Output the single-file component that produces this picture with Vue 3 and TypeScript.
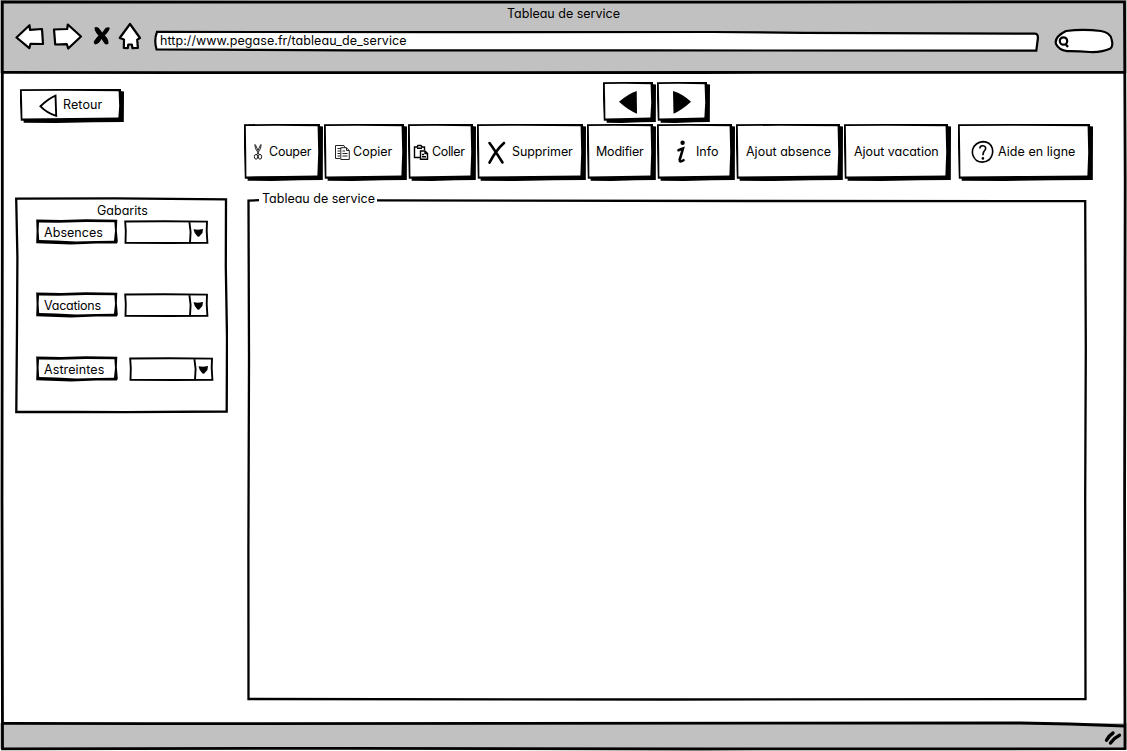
<script setup lang="ts">
type IconName = 'scissors' | 'copy' | 'paste' | 'cross' | 'info' | 'help' | ''

interface SketchButton {
  label: string
  icon: IconName
  width: number
  textX: number
  spacing: number
}

interface Template {
  label: string
  spacing: number
  wide: boolean
}

const tools: SketchButton[] = [
  { label: 'Couper', icon: 'scissors', width: 79, textX: 25, spacing: -0.25 },
  { label: 'Copier', icon: 'copy', width: 83, textX: 29, spacing: 0 },
  { label: 'Coller', icon: 'paste', width: 68, textX: 24, spacing: -0.35 },
  { label: 'Supprimer', icon: 'cross', width: 109, textX: 35, spacing: -0.1 },
  { label: 'Modifier', icon: '', width: 69, textX: 9, spacing: -0.2 },
  { label: 'Info', icon: 'info', width: 78, textX: 39, spacing: 0 },
  { label: 'Ajout absence', icon: '', width: 107, textX: 10, spacing: 0 },
  { label: 'Ajout vacation', icon: '', width: 107, textX: 10, spacing: -0.05 },
  { label: 'Aide en ligne', icon: 'help', width: 135, textX: 40, spacing: 0.05 },
]

const templates: Template[] = [
  { label: 'Absences', spacing: 0.05, wide: false },
  { label: 'Vacations', spacing: -0.25, wide: false },
  { label: 'Astreintes', spacing: 0.1, wide: true },
]

// Hand-drawn outline of a raised button: drop shadow, then edge, then face.
const shadow = (w: number, h: number) =>
  `M3.5 ${h - 5}L3.7 ${h - 0.3}L${w * 0.35} ${h}L${w * 0.7} ${h - 0.7}L${w - 0.2} ${h - 0.9}L${w} 2.4L${w - 5} 2Z`
const edge = (w: number, h: number) =>
  `M0 0.2L${w * 0.4} 0L${w - 3} 0L${w - 2.7} ${h * 0.5}L${w - 3} ${h - 3}L${w * 0.5} ${h - 3}L0.8 ${h - 2.2}L0 ${h * 0.4}Z`
const face = (w: number, h: number) =>
  `M1.8 2L${w * 0.4} 1.8L${w - 5.4} 2.2L${w - 4.8} ${h * 0.5}L${w - 5.6} ${h - 5.6}L${w * 0.5} ${h - 5}L2.4 ${h - 4.6}L2.2 ${h * 0.5}Z`
</script>

<template>
  <div class="window">
    <header class="chrome">
      <div class="title">Tableau de service</div>
      <div class="nav">
        <svg class="back" width="30" height="28" viewBox="0 0 30 28">
          <path d="M1.500 14.500L14.500 2.200L15 6.800L27 6L28 21L15.500 20.800L14.300 25.200Z" />
        </svg>
        <svg class="forward" width="31" height="30" viewBox="0 0 31 30">
          <path d="M2 7.500L15.200 7L15.800 2.500L29 14.500L16.200 26.500L14.800 22.200L3.200 22.500L2.800 17Z" />
        </svg>
        <svg class="stop" width="18" height="21" viewBox="0 0 18 21">
          <path d="M1.500 1.500Q3 .2 5.500 1.800L9.300 6.500L12.500 2Q15 .8 16.800 1.800Q16.500 5 11.800 9.500Q15.800 13 15.500 17.500Q13.500 19.500 11.500 17.500L8.500 13Q6 18 2 18.500Q.3 17 .8 15.500Q3 12 5.500 9.500Q1.500 5.500 1.500 1.500Z" />
        </svg>
        <svg class="home" width="24" height="29" viewBox="0 0 24 29">
          <path d="M12 2L22 16L19.200 17.600L19.900 26L14.500 26.200L13.800 22.500L10.300 22.500L9.800 26.200L5.800 26L6 17.500L1.700 16Z" />
        </svg>
        <div class="url">
          <svg width="888" height="22" viewBox="0 0 888 22">
            <path d="M4 1.900L300 2.200L560 2L650 2.800L882 3.700Q885.500 4 884.800 9L883.300 20.700L500 20.400L200 20.400L3.500 19.300Q.8 10 4 1.900Z" />
          </svg>
          <span>http://www.pegase.fr/tableau_de_service</span>
        </div>
        <svg class="search" width="62" height="27" viewBox="0 0 62 27">
          <path d="M13 3Q30 .8 48 3Q57 4.500 58.500 11Q60.500 18 57.500 20.500Q49 24.500 37 24Q24 23 14 23.200Q6 22 3 16Q1 9 13 3Z" />
          <g class="lens"><ellipse cx="10.500" cy="13" rx="3.700" ry="3.700" /><path d="M12.500 16L15 19" /></g>
        </svg>
      </div>
    </header>

    <main class="body">
      <aside class="side">
        <button class="raised retour">
          <svg width="104" height="34" viewBox="0 0 104 34">
            <path :d="shadow(104, 34)" /><path :d="edge(104, 34)" /><path class="face" :d="face(104, 34)" />
            <path class="line" d="M20.500 17.300Q28 10 35.500 6.700L36.200 26.800Q27 24 20.500 17.300Z" />
          </svg>
          <span class="text">Retour</span>
        </button>

        <section class="panel">
          <svg class="outline" width="213" height="217" viewBox="0 0 213 217">
            <path d="M1.200 1.700L100 1.400L211 2.300L210.800 70L212 140L211.700 214.500L110 215.200L60 215L1.300 215L2 130L2.400 60Z" />
          </svg>
          <div class="content">
            <h2>Gabarits</h2>
            <div v-for="item in templates" :key="item.label" class="row" :class="{ wide: item.wide }">
              <div class="tag">
                <svg width="82" height="26" viewBox="0 0 82 26">
                  <path fill-rule="evenodd" d="M.2 .4L25 1L50 .2L81.300 .7L80.800 11L81.800 22.500L81 24.600L60 24.500L35 25.500L.2 24.200L.6 12ZM3 3.600L2.600 12L3.200 21L20 21.500L40 22.500L60 22L78 21.700L79 12L78.400 3.300L50 2.900L22 3.700Z" />
                </svg>
                <span :style="{ letterSpacing: item.spacing + 'px' }">{{ item.label }}</span>
              </div>
              <svg class="combo" width="85" height="26" viewBox="0 0 85 26">
                <path class="line" d="M1.200 2.500L40 2.200L83 2.600L82.700 12L83.400 23.700L45 24L1.500 23.800L1.800 12ZM65.300 2.200L66.600 13L66 23.800" />
                <path class="tri" d="M69.500 10.200L74 10.800L79 10.100L78.400 13.900L75 17.800L73.500 17.600Q70 14 69.500 10.200Z" />
              </svg>
            </div>
          </div>
        </section>
      </aside>

      <section class="work">
        <div class="pager">
          <button class="raised" aria-label="Précédent">
            <svg width="53" height="41" viewBox="0 0 53 41">
              <path :d="shadow(53, 41)" /><path :d="edge(53, 41)" /><path class="face" :d="face(53, 41)" />
              <path d="M16 19.800Q25 12 33.700 9L34 31.800Q25 28 16 19.800Z" />
            </svg>
          </button>
          <button class="raised" aria-label="Suivant">
            <svg width="53" height="41" viewBox="0 0 53 41">
              <path :d="shadow(53, 41)" /><path :d="edge(53, 41)" /><path class="face" :d="face(53, 41)" />
              <path d="M16 9Q26 12 34 19.800Q25 28 16.500 31.800Z" />
            </svg>
          </button>
        </div>

        <div class="toolbar">
          <button v-for="tool in tools" :key="tool.label" class="raised" :class="tool.icon">
            <svg :width="tool.width" height="57" :viewBox="`0 0 ${tool.width} 57`">
              <path :d="shadow(tool.width, 57)" /><path :d="edge(tool.width, 57)" /><path class="face" :d="face(tool.width, 57)" />
              <g v-if="tool.icon === 'scissors'" class="thin">
                <path d="M10.800 20.500L11.500 24.500L15.500 31M17.200 20.500L16.500 24.500L12.500 31M11.300 20.500L14 26.500L16.700 20.500" />
                <ellipse cx="12" cy="32.800" rx="1.700" ry="2.400" /><ellipse cx="16" cy="32.800" rx="1.700" ry="2.400" />
              </g>
              <g v-else-if="tool.icon === 'copy'" class="thin">
                <path d="M16 34.500H11.500V21.500H20L21 24M13.500 24.500H18M13.500 27H16M13.500 29.500H16M13.500 32H16" />
                <path class="paper" d="M16.800 23.700H22.500L25.300 26.500V35.500H16.800Z" />
                <path d="M22.500 23.700V26.500H25.300M18.500 27H21M18.500 29.500H23.500M18.500 32H23.500" />
              </g>
              <g v-else-if="tool.icon === 'paste'" class="thin strong">
                <path d="M12 33.500H6.500V23H9L10 21.500H13L14 23H16.500V26M9 24.300H14" />
                <path class="paper" d="M12.500 27H17L19.500 29.500V35.300H12.500Z" />
                <path d="M17 27V29.500H19.500M14 30.500H16M14 32.700H18" />
              </g>
              <path v-else-if="tool.icon === 'cross'" class="cross-line" d="M12.500 19Q17 25 25.500 38.500M27 19Q19 26 12.500 38.700" />
              <g v-else-if="tool.icon === 'info'">
                <circle cx="25.600" cy="18.800" r="2.200" />
                <path class="i-line" d="M21.500 26.200Q24 25.200 26 24.500Q24.500 30 22.700 35.500Q22.500 39 26.500 36.200" />
              </g>
              <g v-else-if="tool.icon === 'help'">
                <path class="ring" d="M25 17.600Q32 17.800 34.200 24Q36 30 31.500 35.500Q25 40.300 18.500 36.500Q13.500 32 14.600 25.500Q17 18.300 25 17.600Z" />
                <path class="ring" d="M21.800 24.500Q22 21.600 25 21.800Q28.300 22.300 27.500 25.300Q24.700 28.300 24.900 31.200" />
                <circle cx="24.900" cy="34.400" r="1.300" />
              </g>
            </svg>
            <span class="text" :style="{ marginLeft: tool.textX + 'px', letterSpacing: tool.spacing + 'px' }">{{ tool.label }}</span>
          </button>
        </div>

        <section class="schedule">
          <svg width="841" height="503" viewBox="0 0 841 503">
            <path d="M12 2.200L1.500 2.500L2 160L1.400 350L1.500 501L420 501.500L838.500 501L838.200 300L838.800 150L838.200 3.200L500 3L130 2.300" />
          </svg>
          <h2>Tableau de service</h2>
        </section>
      </section>
    </main>

    <footer class="status">
      <svg width="18" height="16" viewBox="0 0 18 16">
        <path d="M2.500 10.200Q5 5.500 9 3M6.500 13Q10 8 15.500 5.300" />
      </svg>
    </footer>

    <svg class="frame" width="1127" height="751" viewBox="0 0 1127 751">
      <path d="M2.300 2L560 2.200L1124.500 1.800L1125.200 180L1124.600 500L1125 748.700L700 749L350 748.300L2.500 748.800L2 500L2.300 250Z" />
      <path d="M2 72.300L180 72.700L700 72.500L1125 72.300M2 723.300L150 723.600L1020 723L1070 724L1125 726" />
    </svg>
  </div>
</template>

<style>
body {
  background: #fff;
}
</style>

<style scoped>
* {
  box-sizing: border-box;
}
.window {
  position: relative;
  display: flex;
  flex-direction: column;
  width: 1127px;
  height: 751px;
  overflow: hidden;
  background: #fff;
  color: #000;
  font-family: Inter, 'Open Sans', sans-serif;
  font-feature-settings: 'cv11', 'ss03';
  font-size: 12.5px;
  line-height: 18px;
}
svg {
  display: block;
  flex: none;
}
.frame {
  position: absolute;
  inset: 0;
  fill: none;
  stroke: #000;
  stroke-width: 2.8;
  pointer-events: none;
}
.chrome {
  height: 73px;
  padding-top: 5px;
  background: #c1c1c1;
}
.title {
  height: 17px;
  text-align: center;
}
.nav {
  display: flex;
  align-items: flex-start;
  padding-left: 15px;
}
.nav > svg {
  fill: #fff;
  stroke: #000;
  stroke-width: 2.2;
  stroke-linejoin: round;
}
.back {
  margin-top: 1px;
}
.forward {
  margin-left: 7px;
}
.nav > .stop {
  margin: 4px 0 0 10px;
  fill: #000;
  stroke: none;
}
.home {
  margin-left: 7px;
}
.url {
  display: grid;
  margin: 8px 0 0 11px;
}
.url > * {
  grid-area: 1 / 1;
}
.url svg {
  fill: #fff;
  stroke: #000;
  stroke-width: 2.2;
}
.url span {
  padding-left: 7px;
  letter-spacing: 0.07px;
  line-height: 21px;
}
.search {
  margin: 6px 0 0 12px;
}
.lens {
  stroke-width: 2.2;
}
.body {
  display: flex;
  height: 650px;
}
.side {
  width: 244px;
  padding: 16px 0 0 15px;
}
.work {
  width: 860px;
  padding-top: 9px;
}
.raised {
  display: grid;
  flex: none;
  align-items: center;
  padding: 0;
  border: 0;
  background: none;
  color: inherit;
  font: inherit;
  font-feature-settings: inherit;
  text-align: left;
}
.raised > * {
  grid-area: 1 / 1;
}
.text {
  white-space: nowrap;
}
.toolbar .text {
  margin-top: -2px;
}
.face {
  fill: #fff;
}
.line {
  fill: #fff;
  stroke: #000;
  stroke-width: 1.9;
}
.thin {
  fill: none;
  stroke: #222;
  stroke-width: 1;
}
.strong {
  stroke: #000;
  stroke-width: 1.4;
}
.paper {
  fill: #fff;
}
.cross-line,
.i-line {
  fill: none;
  stroke: #000;
  stroke-width: 2.6;
  stroke-linecap: round;
}
.ring {
  fill: none;
  stroke: #000;
  stroke-width: 1.6;
}
.retour {
  margin-left: 5px;
}
.retour .text {
  margin: -3px 0 0 43px;
  letter-spacing: 0.1px;
}
.panel {
  display: grid;
  width: 213px;
  height: 217px;
  margin-top: 74px;
}
.panel > * {
  grid-area: 1 / 1;
}
.outline,
.schedule svg {
  fill: none;
  stroke: #000;
  stroke-width: 2.3;
}
.content {
  padding: 5px 0 0 21px;
}
h2 {
  margin: 0;
  font-size: inherit;
  font-weight: 400;
}
.content h2 {
  padding-left: 61px;
  line-height: 17px;
}
.row {
  display: flex;
  align-items: center;
  gap: 6px;
  height: 26px;
  margin-bottom: 47px;
}
.wide {
  gap: 11px;
  margin-top: -9px;
}
.tag {
  display: grid;
  align-items: center;
}
.tag > * {
  grid-area: 1 / 1;
}
.tag span {
  padding: 2px 0 0 8px;
}
.pager,
.toolbar {
  display: flex;
  gap: 1px;
}
.pager {
  padding-left: 359px;
}
.toolbar {
  margin-top: 1px;
}
.toolbar .help {
  margin-left: 6px;
}
.schedule {
  display: grid;
  justify-items: start;
  width: 841px;
  margin: 17px 0 0 3px;
}
.schedule > * {
  grid-area: 1 / 1;
}
.schedule h2 {
  padding-left: 15px;
  margin-top: -8px;
}
.status {
  display: flex;
  justify-content: flex-end;
  height: 26px;
  padding: 7px 5px 0 0;
  background: #c1c1c1;
}
.status svg {
  fill: none;
  stroke: #000;
  stroke-width: 3.4;
  stroke-linecap: round;
}
</style>
